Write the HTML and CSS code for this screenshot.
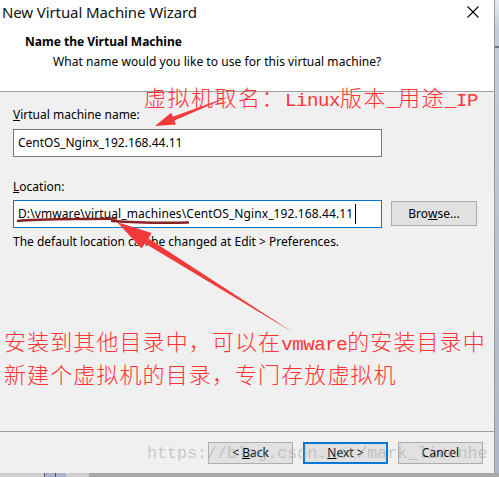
FILE: index.html
```html
<!DOCTYPE html>
<html>
<head>
<meta charset="utf-8">
<title>New Virtual Machine Wizard</title>
<link rel="stylesheet" href="styles.css">
</head>
<body>
<div class="screen">
  <div class="window">
    <div class="head">
      <div class="titlebar">
        <span class="title">New Virtual Machine Wizard</span>
        <svg class="close" width="12" height="12" viewBox="0 0 12 12"><path d="M0.5 0.5 L11.5 11.5 M11.5 0.5 L0.5 11.5" stroke="#000" stroke-width="1.1" fill="none"/></svg>
      </div>
      <div class="wizhead">
        <div class="wiztitle">Name the Virtual Machine</div>
        <div class="wizsub">What name would you like to use for this virtual machine?</div>
      </div>
    </div>
    <div class="content">
      <label class="lbl first"><u>V</u>irtual machine name:</label>
      <div class="field">CentOS_Nginx_192.168.44.11</div>
      <label class="lbl second"><u>L</u>ocation:</label>
      <div class="row">
        <div class="field focus">D:\vmware\virtual_machines\CentOS_Nginx_192.168.44.11<span class="caret"></span></div>
        <div class="btn browse">Bro<u>w</u>se...</div>
      </div>
      <div class="note">The default location can be changed at Edit &gt; Preferences.</div>
    </div>
    <div class="footer">
      <div class="btn">&lt;&nbsp;<u>B</u>ack</div>
      <div class="btn default"><u>N</u>ext&nbsp;&gt;</div>
      <div class="btn">Cancel</div>
    </div>

    <svg class="marks" width="494" height="473" viewBox="0 0 494 473">
      <polygon fill="#f23a3a" points="155,126 176,124.5 174.5,120.5 233,95 172.8,116.8 171.2,112.8"/>
      <polygon fill="#f23a3a" points="117,222 141.5,248.5 145,243.5 294,333 148.5,238.5 151.5,233"/>
      <path d="M18 221 C 40 218.5, 80 219.5, 116 218.5 M 112 221 C 140 223, 165 223, 188 222.5" stroke="#7d0a0a" stroke-width="2.4" fill="none" stroke-linecap="round" opacity="0.9"/>
    </svg>
    <div class="note1">虚拟机取名：<span class="lat">Linux</span>版本<span class="lat">_</span>用途<span class="lat">_IP</span></div>
    <div class="note2">安装到其他目录中，可以在<span class="lat">vmware</span>的安装目录中<br>新建个虚拟机的目录，专门存放虚拟机</div>
    <div class="watermark">https://blog.csdn.net/mark_lirenhe</div>
  </div>
  <div class="desk">
    <div class="deskline"></div>
  </div>
</div>
<div class="taskbar">
  <div class="tb-gap"></div>
  <div class="tb-item"></div>
  <div class="tb-item"></div>
  <div class="tb-rest"></div>
</div>
</body>
</html>
```

FILE: styles.css
```css
html, body {
  margin: 0;
  padding: 0;
}
body {
  width: 499px;
  height: 477px;
  overflow: hidden;
  background: #b9c1cc;
  font-family: "Noto Sans", "Liberation Sans", sans-serif;
  font-size: 12px;
  color: #000;
}
.screen {
  display: flex;
  height: 473px;
}
.window {
  position: relative;
  width: 494px;
  height: 473px;
  border-right: 1px solid #9a9a9a;
  display: flex;
  flex-direction: column;
  background: #f0f0f0;
}
.desk {
  flex: 1;
  background: linear-gradient(#e8ecf2 0, #c4ccd8 30px, #aeb8c8 100%);
  position: relative;
}
.deskline {
  height: 2px;
  margin-top: 46px;
  background: #6b7280;
}
.taskbar {
  display: flex;
  height: 4px;
  background: #cfcfcf;
}
.tb-gap { width: 44px; }
.tb-item { width: 10px; background: #a9b3c8; border-left: 1px solid #555; }
.tb-rest { margin-left: 23px; flex: 1; background: #a8a8a8; }

.head {
  background: #fff;
  height: 91px;
  border-bottom: 1px solid #a0a0a0;
  flex: none;
}
.titlebar {
  height: 28px;
  display: flex;
  align-items: center;
  justify-content: space-between;
  padding: 0 15px 0 2px;
}
.title {
  font-size: 15px;
  letter-spacing: -0.1px;
  color: #111;
  margin-top: -5px;
}
.close { margin-top: -5px; }
.wizhead {
  padding-left: 25px;
}
.wiztitle {
  font-weight: bold;
  font-size: 12px;
  line-height: 16px;
  margin-top: 6px;
}
.wizsub {
  padding-left: 28px;
  line-height: 16px;
  margin-top: 4px;
  letter-spacing: 0.05px;
}
.content {
  box-sizing: border-box;
  flex: none;
  height: 340px;
  padding: 15px 0 0 13px;
  display: flex;
  flex-direction: column;
  align-items: flex-start;
  border-bottom: 1px solid #a0a0a0;
}
.lbl {
  line-height: 16px;
}
.lbl.second {
  margin-top: 22px;
}
.field {
  box-sizing: border-box;
  width: 369px;
  height: 28px;
  margin-top: 6px;
  border: 1px solid #7a7a7a;
  background: #fff;
  padding: 0 4px;
  line-height: 26px;
  white-space: nowrap;
  display: flex;
  align-items: center;
}
.field.focus {
  border-color: #0078d7;
  margin-top: 0;
  letter-spacing: 0.1px;
}
.row {
  display: flex;
  align-items: flex-start;
  margin-top: 5px;
}
.caret {
  display: inline-block;
  width: 1px;
  height: 20px;
  background: #000;
  margin-left: 2px;
}
.btn {
  box-sizing: border-box;
  width: 85px;
  height: 22px;
  background: #e1e1e1;
  border: 1px solid #adadad;
  display: flex;
  align-items: center;
  justify-content: center;
  line-height: 16px;
}
.btn.browse {
  margin-left: 9px;
  margin-top: 1px;
  height: 25px;
  width: 86px;
}
.btn.default {
  border: 2px solid #0078d7;
}
.note {
  margin-top: 6px;
  line-height: 16px;
}
.footer {
  flex: 1;
  display: flex;
  justify-content: flex-end;
  align-items: flex-start;
  gap: 10px;
  padding: 10px 11px 0 0;
}
.marks {
  position: absolute;
  left: 0;
  top: 0;
  pointer-events: none;
}
.note1, .note2 {
  position: absolute;
  color: #f33;
  font-family: "Noto Sans CJK SC", sans-serif;
  font-weight: 300;
  font-size: 22px;
  letter-spacing: 1.1px;
  white-space: nowrap;
}
.lat {
  font-family: "Liberation Mono", monospace;
  font-weight: normal;
  font-size: 19px;
  letter-spacing: -0.4px;
}
.note1 {
  left: 144px;
  top: 80px;
  line-height: 32px;
  letter-spacing: 1.5px;
}
.note2 {
  left: 4px;
  top: 326px;
  line-height: 28px;
}
.watermark {
  position: absolute;
  left: 147px;
  top: 444px;
  font-family: "Liberation Mono", monospace;
  font-size: 16.7px;
  color: rgba(160, 160, 160, 0.5);
  white-space: nowrap;
}
```
